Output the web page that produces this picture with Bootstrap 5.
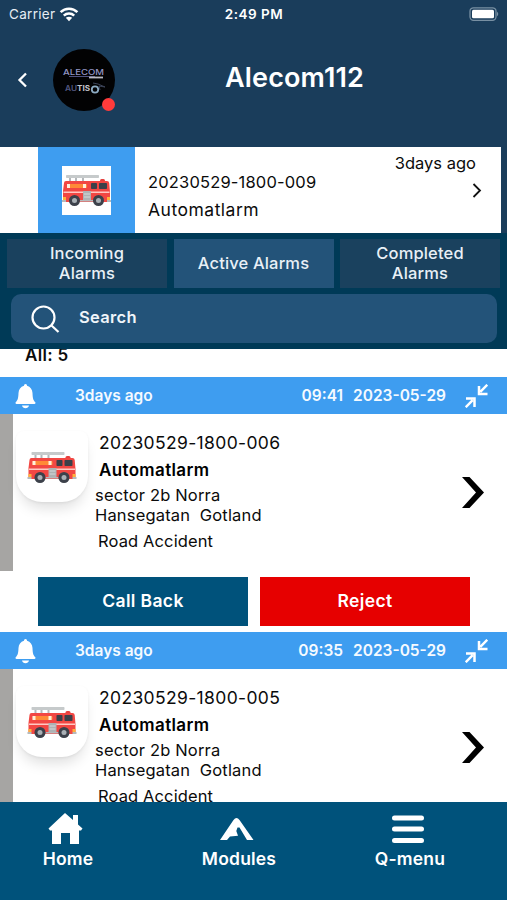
<!DOCTYPE html>
<html lang="en">
<head>
<meta charset="utf-8">
<meta name="viewport" content="width=device-width, initial-scale=1">
<title>Alecom112</title>
<link href="https://cdn.jsdelivr.net/npm/bootstrap@5.3.0/dist/css/bootstrap.min.css" rel="stylesheet">
<style>
body{font-family:Inter,"Liberation Sans",sans-serif;height:900px;overflow:hidden;color:#0b0b0b;background:#fff;font-size:16.5px}
svg{display:block;flex:none}
.top-area{height:147px;background:#1a3d5b}
.status-row{height:28px;font-size:13.5px;padding:0 8px 0 9px;color:#e6edf3}
.status-row .side{flex:1 1 0}
.carrier{letter-spacing:.3px}
.clock{font-weight:600;letter-spacing:.5px;color:#fff}
.title-row{height:104px;padding-left:17px}
.avatar{width:62px;height:62px;background:#020203;margin-left:25px}
.avatar-dot{width:13px;height:13px;background:#ff3b3b;right:0;bottom:0}
.app-title{font-size:27px;font-weight:600;line-height:30px;margin:-4px 0 0 110px;letter-spacing:.15px}
.latest-wrap{height:86px;background:#1a3d5b;padding-right:6px}
.latest{padding-left:38px}
.thumb{width:97px;background:#3e9df0}
.thumb-pic{width:49px;height:49px}
.latest-text{padding:21px 0 0 13px;line-height:28px;letter-spacing:.17px}
.latest-text .kind-name{font-size:17.5px;letter-spacing:.5px}
.latest-side{padding:6px 25px 0 0;line-height:20px}
.latest-side svg{margin:10px -6px 0 0}
.filters{height:116px;background:#003a57;padding:6px 7px 0}
.tabs{gap:6.5px;height:49px}
.tab-item{flex:1 1 0;background:#1a415e;color:#e9f0f6;line-height:20px;font-weight:500;border:0;padding:0 0 1px;letter-spacing:.15px}
.tab-item.on{background:#235379}
.search-box{height:49px;margin:6px 3px 0 4px;border-radius:10px;background:#235379;padding-left:20px;color:#f0f5fa;font-weight:600;font-size:16.5px}
.search-box span{margin:-2px 0 0 19px;letter-spacing:.3px}
.list-area{height:453px}
.count{height:28px;padding-left:25px;line-height:20px;font-weight:600;font-size:17px;letter-spacing:.3px}
.count span{display:block;margin-top:-4px}
.bar{height:37px;background:#3e9df0;padding:1px 19px 0 15px;font-size:15.500px;font-weight:600;color:#f5faff;letter-spacing:0}
.bar .ago{margin-left:39px}
.bar .dt{margin-right:19px;gap:10px}
.alarm-body{height:157px}
.strip{width:13px;background:#a6a5a3}
.truck-tile{width:72px;height:71px;margin:17px 0 0 3px;border-radius:8px 8px 26px 26px;box-shadow:0 10px 14px -4px rgba(0,0,0,.13),0 1px 3px rgba(0,0,0,.06)}
.truck-tile svg{margin:12px 1px 0 0}
.alarm-text{padding:16px 0 0 7px;line-height:20px;width:374px}
.alarm-text .ident{margin:3px 0 0 4px;line-height:20px;font-size:17.500px;letter-spacing:.35px}
.alarm-text .kind{margin:8px 0 0 4px;font-weight:600;line-height:19px;color:#000;font-size:17px;letter-spacing:.35px}
.alarm-text .place{margin-top:5px;font-size:16.500px;white-space:pre;letter-spacing:.17px}
.alarm-text .cause{margin:6px 0 0 3px;font-size:16.500px;letter-spacing:.12px}
.go{margin-top:63px}
.actions{height:61px;padding:6px 37px 0 38px;gap:12px}
.act{flex:1 1 0;height:49px;border-radius:0;border:0;color:#fff;font-weight:600;font-size:17.5px;padding:0;letter-spacing:.35px}
.act-call,.act-call:hover{background:#00527b;color:#fff}
.act-no,.act-no:hover{background:#e60000;color:#fff}
.bottom-nav{height:98px;background:#00527b;color:#fff;font-weight:600;font-size:17.5px;padding:8px 13px 0 0;letter-spacing:.2px}
.nav-cell{width:136px;text-align:center;line-height:22px}
.nav-cell:nth-child(2){width:206px}
.nav-cell svg{margin:0 auto;height:38px;padding:0 5px 0 0;box-sizing:content-box}
</style>
</head>
<body>
<svg width="0" height="0" class="d-none">
<symbol id="truck" viewBox="0 0 49 49">
 <path d="M8 11v5M14 11v5M21 11v5" stroke="#b4b8bb" stroke-width="2"/>
 <rect x="4" y="9" width="33" height="3" rx=".8" fill="#c6cacb"/>
 <rect x="38" y="13" width="5" height="4" rx="1.5" fill="#e63f3d"/>
 <path d="M2 17q0-2 2-2h41q2 0 2.200 2l.8 9v10H1V25z" fill="#f24743"/>
 <path d="M1.500 25.500h46v1.600h-46z" fill="#ffc9c3"/>
 <rect x="5" y="18" width="20" height="4" rx="1" fill="#ff8a37"/>
 <path d="M5 18h3v4H5zM21 18h3v4h-3z" fill="#fff0dc"/>
 <rect x="29" y="17" width="6" height="6" rx=".8" fill="#3b4049"/>
 <rect x="37" y="17" width="8" height="6" rx=".8" fill="#3b4049"/>
 <rect x="21" y="25" width="8" height="9" fill="#aeb2b4"/>
 <path d="M22 28h6M22 31h6" stroke="#d5d8d9"/>
 <path d="M1 31h3v3H1zM45 31h3v3h-3z" fill="#ffb13b"/>
 <path d="M0 34h4v2H0zM45 34h4v2h-4zM18 34h13v1.500H18z" fill="#b6babc"/>
 <g fill="#3c414a"><circle cx="12.500" cy="34.500" r="5.500"/><circle cx="36.500" cy="34.500" r="5.500"/></g>
 <g fill="#a9b0b5"><circle cx="12.500" cy="34.500" r="2.500"/><circle cx="36.500" cy="34.500" r="2.500"/></g>
</symbol>
<symbol id="bell" viewBox="0 0 20 25"><path d="M10 0c1 0 1.500.7 1.500 1.800C15 2.800 16.800 5.800 17 9c.2 5 .6 7 2.800 9.300.5.800 0 1.700-.8 1.700H1c-.8 0-1.300-.9-.8-1.700C2.400 16 2.800 14 3 9c.2-3.200 2-6.200 5.500-7.200C8.500.7 9 0 10 0zM6.500 21.500h7c-.5 1.900-1.700 2.700-3.500 2.700s-3-.8-3.500-2.700z" fill="#fff"/></symbol>
<symbol id="shrink" viewBox="0 0 23 24"><path d="M22.300.8l-7 7M14 2v8h8.500M.7 23.200l7-7M1 14.500h8.500V23" stroke="#fff" stroke-width="2.500" fill="none"/></symbol>
<symbol id="next" viewBox="0 0 22 31"><path d="M0 0h7.500L22 15.500 7.500 31H0l14-15.500z" fill="#000"/></symbol>
</svg>

<header class="top-area">
 <div class="status-row d-flex align-items-center">
  <div class="side d-flex align-items-center gap-1"><span class="carrier">Carrier</span>
   <svg width="20" height="15" viewBox="0 0 20 15"><g fill="none" stroke="#fff" stroke-width="2.500"><path d="M1.600 5.200a12 12 0 0 1 16.800 0"/><path d="M4.800 8.600a7.500 7.500 0 0 1 10.400 0"/></g><path d="M10 14.300l-3.200-3.500q3.200-2.300 6.400 0z" fill="#fff"/></svg>
  </div>
  <span class="clock">2:49 PM</span>
  <div class="side d-flex justify-content-end"><svg width="31" height="15" viewBox="0 0 31 15"><rect x="2" y=".8" width="26" height="12.500" rx="3.500" fill="none" stroke="#7890a3" stroke-width="1.300"/><rect x="4" y="2.800" width="22" height="8.500" rx="1.500" fill="#fff"/><path d="M29 4.800q2.500 2.200 0 4.500z" fill="#7890a3"/></svg></div>
 </div>
 <div class="title-row d-flex align-items-center text-white">
  <svg width="11" height="16" viewBox="0 0 11 16"><path d="M9 1.500L2.500 8 9 14.500" fill="none" stroke="#fff" stroke-width="2.300"/></svg>
  <div class="avatar rounded-circle position-relative">
   <svg width="62" height="62" viewBox="0 0 62 62">
    <text x="10" y="26" font-size="8" font-weight="500" textLength="41" lengthAdjust="spacingAndGlyphs" fill="#9395c4">ALECOM</text>
    <path d="M16 27.500h26" stroke="#515381"/><path d="M36 28.500h14" stroke="#b9b9c2" stroke-width="1.800"/>
    <text x="12" y="42" font-size="7" font-weight="600" textLength="12" lengthAdjust="spacingAndGlyphs" fill="#535781">AU</text>
    <text x="24" y="42" font-size="7" font-weight="700" textLength="13" lengthAdjust="spacingAndGlyphs" fill="#c2c4cd">TIS</text>
    <circle cx="42" cy="40.500" r="3.200" fill="none" stroke="#8caac2" stroke-width="1.800"/><path d="M40 34l5 1 7 3-6-1 1 4" stroke="#3c4459" fill="none"/>
   </svg>
   <span class="avatar-dot rounded-circle position-absolute"></span>
  </div>
  <h1 class="app-title">Alecom112</h1>
 </div>
</header>

<section class="latest-wrap">
 <div class="latest bg-white h-100 d-flex">
  <div class="thumb d-flex align-items-center justify-content-center"><div class="thumb-pic bg-white"><svg width="49" height="49"><use href="#truck"/></svg></div></div>
  <div class="latest-text flex-grow-1"><div>20230529-1800-009</div><div class="kind-name">Automatlarm</div></div>
  <div class="latest-side d-flex flex-column align-items-end"><span>3days ago</span>
   <svg width="10" height="15" viewBox="0 0 10 15"><path d="M1.500 1l6.500 6.500L1.500 14" fill="none" stroke="#111" stroke-width="1.800"/></svg></div>
 </div>
</section>

<section class="filters">
 <div class="tabs d-flex">
  <button class="tab-item">Incoming<br>Alarms</button>
  <button class="tab-item on">Active Alarms</button>
  <button class="tab-item">Completed<br>Alarms</button>
 </div>
 <div class="search-box d-flex align-items-center">
  <svg width="29" height="28" viewBox="0 0 29 28"><g fill="none" stroke="#fff" stroke-width="2.200"><circle cx="12.500" cy="12.500" r="11"/><path d="M20.500 20.500l7 6.500"/></g></svg>
  <span>Search</span>
 </div>
</section>

<main class="list-area overflow-hidden">
 <div class="count overflow-hidden"><span>All: 5</span></div>
 <article>
  <div class="bar d-flex align-items-center"><svg width="21" height="25"><use href="#bell"/></svg><span class="ago">3days ago</span><span class="dt d-flex ms-auto"><span>09:41</span><span>2023-05-29</span></span><svg width="23" height="24"><use href="#shrink"/></svg></div>
  <div class="alarm-body d-flex"><div class="strip"></div>
   <div class="truck-tile d-flex justify-content-center bg-white"><svg width="50" height="49"><use href="#truck"/></svg></div>
   <div class="alarm-text"><div class="ident">20230529-1800-006</div><div class="kind">Automatlarm</div><div class="place">sector 2b Norra
Hansegatan  Gotland</div><div class="cause">Road Accident</div></div>
   <svg class="go" width="22" height="31"><use href="#next"/></svg>
  </div>
  <div class="actions d-flex"><button class="btn act act-call">Call Back</button><button class="btn act act-no">Reject</button></div>
 </article>
 <article>
  <div class="bar d-flex align-items-center"><svg width="21" height="25"><use href="#bell"/></svg><span class="ago">3days ago</span><span class="dt d-flex ms-auto"><span>09:35</span><span>2023-05-29</span></span><svg width="23" height="24"><use href="#shrink"/></svg></div>
  <div class="alarm-body d-flex"><div class="strip"></div>
   <div class="truck-tile d-flex justify-content-center bg-white"><svg width="50" height="49"><use href="#truck"/></svg></div>
   <div class="alarm-text"><div class="ident">20230529-1800-005</div><div class="kind">Automatlarm</div><div class="place">sector 2b Norra
Hansegatan  Gotland</div><div class="cause">Road Accident</div></div>
   <svg class="go" width="22" height="31"><use href="#next"/></svg>
  </div>
 </article>
</main>

<nav class="bottom-nav d-flex">
 <div class="nav-cell"><svg width="35" height="38" viewBox="0 0 35 38"><path d="M17 3l8 7V5h5v9.500l4.500 4-1.500 2h-2V34h-9V23h-9v11H4V20.500H2l-1.500-2z" fill="#fff"/></svg>Home</div>
 <div class="nav-cell"><svg width="34" height="38" viewBox="0 0 34 38"><path d="M0 30L13.500 10q3-4 6 0L33.500 30H27L19.500 17.500h-2L16.300 21l1.700 4.800-8 .7L7 30z" fill="#fff"/></svg>Modules</div>
 <div class="nav-cell"><svg width="32" height="38" viewBox="0 0 32 38"><path d="M2.500 8h27M2.500 19h27M2.500 30.500h27" stroke="#fff" stroke-width="5" stroke-linecap="round"/></svg>Q-menu</div>
</nav>
<script src="https://cdn.jsdelivr.net/npm/bootstrap@5.3.0/dist/js/bootstrap.bundle.min.js"></script>
</body>
</html>
